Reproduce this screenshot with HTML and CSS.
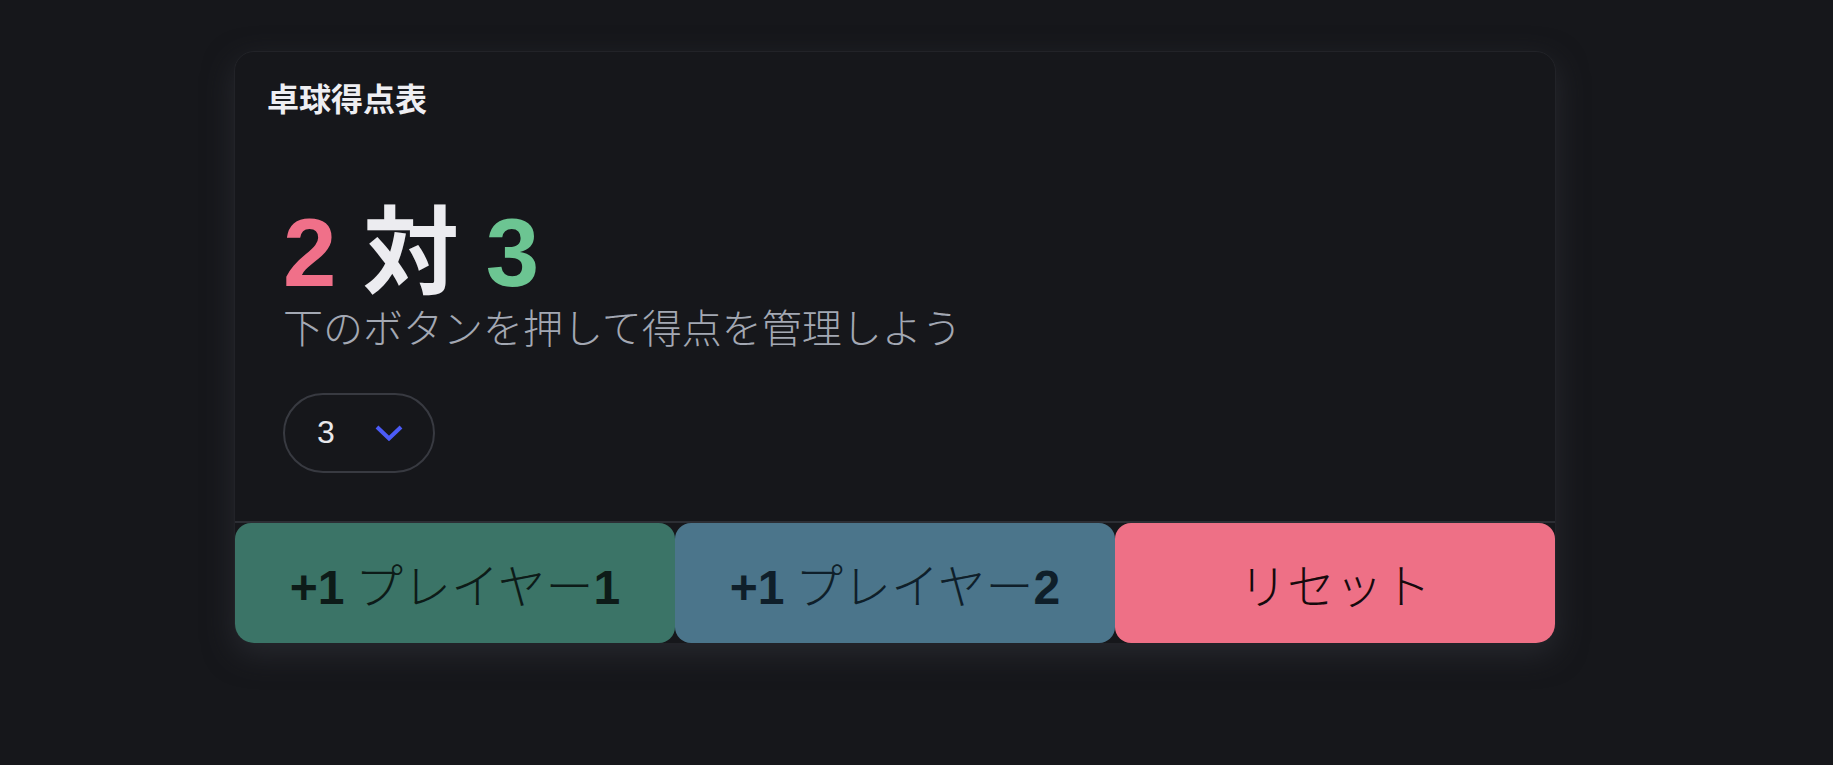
FILE: index.html
```html
<!DOCTYPE html>
<html lang="ja">
<head>
<meta charset="utf-8">
<title>卓球得点表</title>
<link rel="stylesheet" href="styles.css">
</head>
<body>
<main class="page">
  <section class="card">
    <header class="card-header">
      <h1 class="title">卓球得点表</h1>
    </header>
    <div class="card-body">
      <div class="score"><span class="p1">2</span> 対 <span class="p2">3</span></div>
      <p class="subtitle">下のボタンを押して得点を管理しよう</p>
      <div class="select">
        <span class="select-value">3</span>
        <svg class="chevron" width="28" height="16" viewBox="0 0 28 16" aria-hidden="true">
          <path d="M2 2 L14 13.5 L26 2" fill="none" stroke="currentColor" stroke-width="4"/>
        </svg>
      </div>
    </div>
    <footer class="card-footer">
      <button class="btn btn-p1"><span class="latin">+1</span> プレイヤー<span class="latin">1</span></button>
      <button class="btn btn-p2"><span class="latin">+1</span> プレイヤー<span class="latin">2</span></button>
      <button class="btn btn-reset">リセット</button>
    </footer>
  </section>
</main>
</body>
</html>
```

FILE: styles.css
```css
html, body {
  margin: 0;
  padding: 0;
  background: #16171b;
  height: 100%;
}

body {
  font-family: "Liberation Sans", "Noto Sans CJK JP", sans-serif;
  color: #ececf0;
}

.page {
  padding: 51px 0 0 234px;
}

.card {
  width: 1320px;
  background: #16171b;
  border: 1px solid #222328;
  border-radius: 20px;
  overflow: hidden;
  box-shadow: 0 10px 30px rgba(44, 45, 51, 0.8);
}

.card-header {
  padding: 21px 32px 31px;
}

.title {
  margin: 0;
  font-family: "Noto Sans CJK JP", sans-serif;
  font-size: 32px;
  line-height: 48px;
  font-weight: 700;
  color: #eeeef2;
}

.card-body {
  padding: 48px 48px 48px;
}

.score {
  font-family: "Liberation Sans", "Noto Sans CJK JP", sans-serif;
  font-size: 96px;
  line-height: 1.1;
  font-weight: 700;
  color: #ececf0;
}

.p1 { color: #f07089; }
.p2 { color: #6cc592; }

.subtitle {
  margin: 0;
  font-family: "Noto Sans CJK JP", sans-serif;
  font-size: 40px;
  line-height: 1;
  font-weight: 300;
  color: #a3a8b3;
}

.select {
  margin-top: 47px;
  box-sizing: border-box;
  width: 152px;
  height: 80px;
  border: 2px solid #383a41;
  border-radius: 40px;
  display: flex;
  align-items: center;
  padding: 0 30px 0 32px;
  gap: 40px;
}

.select-value {
  font-family: "Liberation Sans", sans-serif;
  font-size: 32px;
  color: #e8e8ec;
}

.chevron {
  color: #4b5bf7;
  display: block;
}

.card-footer {
  display: grid;
  grid-template-columns: 1fr 1fr 1fr;
  border-top: 2px solid #2c2e34;
}

.btn {
  height: 120px;
  border: none;
  border-radius: 16px;
  margin: 0;
  padding: 0;
  font-family: "Noto Sans CJK JP", sans-serif;
  font-size: 48px;
  font-weight: 300;
  cursor: pointer;
}

.latin {
  font-family: "Liberation Sans", sans-serif;
  font-weight: 700;
}

.btn-p1 {
  background: #3b7467;
  color: #0d1b18;
}

.btn-p2 {
  background: #4b758b;
  color: #0f1f2a;
}

.btn-reset {
  background: #ee7086;
  color: #160a0d;
}
```
